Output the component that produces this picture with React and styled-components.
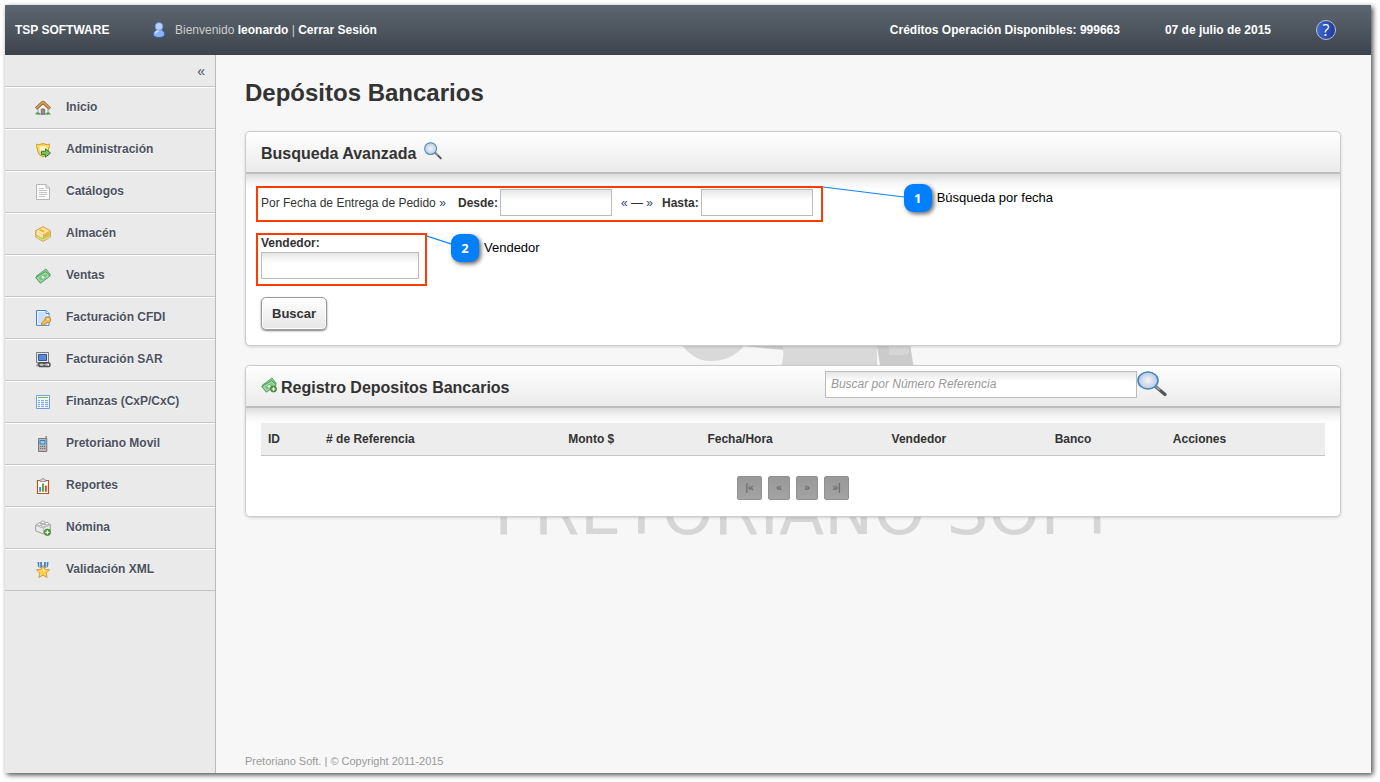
import React, { useState } from "react";
import styled, { createGlobalStyle } from "styled-components";

const HomeIcon = () => (
  <Icon viewBox="0 0 16 16">
    <path d="M3 8.5L8 4l5 4.500V14H3z" fill="#f3efe9" stroke="#8b8b8b" strokeWidth="0.8" />
    <path d="M6.300 9h3.400v5.300H6.300z" fill="#8f8f8f" stroke="#5d5d5d" strokeWidth="0.7" />
    <path d="M1 8.600L8 2.200l7 6.400" fill="none" stroke="#8a5a22" strokeWidth="3" strokeLinejoin="round" />
    <path d="M1.200 8.400L8 2.200l6.800 6.200" fill="none" stroke="#d9a35a" strokeWidth="1.6" />
    <path d="M0.500 14.400c0-1.500 1.200-2.400 2.600-2.200 1.200.2 2 1 2.200 2.200zM10.700 14.400c.2-1.400 1.200-2.200 2.400-2.200 1.400 0 2.400 1 2.400 2.200z" fill="#4fa04a" />
  </Icon>
);

const ShieldIcon = () => (
  <Icon viewBox="0 0 16 16">
    <path d="M1.7 2.2l2.1.6L8 1.6l4.2 1.2 2.1-.6v3l-.7 1c0 4-2 7-5.6 8.6C4.400 13.200 2.400 10.200 2.400 6.200l-.7-1z" fill="#fbe48a" stroke="#d9a21d" strokeWidth="1.1" />
    <path d="M4 4.300L8 3.200l4 1.100c.1 4-1.200 6.600-4 8.400-2.800-1.800-4.100-4.400-4-8.400z" fill="#fff5c4" stroke="#f3cd55" strokeWidth="0.8" />
    <path d="M6.500 9.300h4V6.900l5 4.100-5 4.200v-2.500h-4z" fill="#79c267" stroke="#2f7d2c" strokeWidth="1" strokeLinejoin="round" />
  </Icon>
);

const PageIcon = () => (
  <Icon viewBox="0 0 16 16">
    <path d="M1.500.5h9.500l3.500 3.500v11.500h-13z" fill="#fafafa" stroke="#b5b5b5" />
    <path d="M11 .5v3.500h3.500" fill="#e3e3e3" stroke="#b5b5b5" />
    <path d="M4 4.500h5M4 6.500h8M4 8.500h8M4 10.500h8M4 12.500h6" stroke="#c3c3c3" />
  </Icon>
);

const BoxIcon = () => (
  <Icon viewBox="0 0 16 16">
    <path d="M8 .7l7.300 4v6.400L8 15.300.7 11.100V4.700z" fill="#f6d27c" stroke="#cf9a35" strokeLinejoin="round" />
    <path d="M8 1.600l6.200 3.400L8 8.500 1.800 5z" fill="#fdeaa9" />
    <path d="M6 3l4.500 2.600-2.200 1.200L3.800 4.200z" fill="#efb544" />
    <path d="M8 8.500v4.200l6.200-3.400V5z" fill="#e9b04b" />
    <path d="M8 8.500v4.200L1.800 9.300V5z" fill="#fbe2a0" />
    <path d="M1.200 8.800L8 12.200l6.800-3.400v2.100L8 14.600 1.200 10.900z" fill="#a6d15a" />
    <path d="M1.200 10.600L8 14.200l6.800-3.600" fill="none" stroke="#fbe2a0" />
  </Icon>
);

const MoneyIcon = ({ plus }) => (
  <Icon viewBox="0 0 16 16">
    <path d="M1.200 8.200L11 .9l4.300 5.600-9.700 7.400z" fill="#8ccf96" stroke="#4c9c58" strokeWidth="0.8" />
    <path d="M.7 9.600L10.600 3.600l4.700 4.200-9.900 7.400z" fill="#7fc68a" stroke="#459450" strokeWidth="0.9" />
    <path d="M2.500 9.800l8-4.800 3.100 2.800-8.100 5.800z" fill="none" stroke="#c7eccb" strokeWidth="0.8" />
    <ellipse cx="8" cy="9.300" rx="2" ry="1.700" fill="#e4f7e5" stroke="#4c9c58" strokeWidth="0.6" />
    {plus && <circle cx="12.500" cy="12" r="3" fill="#58a03c" stroke="#36761f" strokeWidth="0.8" />}
    {plus && <path d="M12.500 10.200v3.600M10.700 12h3.600" stroke="#fff" strokeWidth="1.200" />}
  </Icon>
);

const InvoiceIcon = () => (
  <Icon viewBox="0 0 16 16">
    <path d="M1.500.5h9.500l3 3v11.800H1.500z" fill="#c9e0f8" stroke="#3b82d0" />
    <path d="M2.500 1.500h8v3h2.500v9.800H2.500z" fill="none" stroke="#f2f8ff" />
    <path d="M11 .5v3h3" fill="#fff" stroke="#3b82d0" />
    <path d="M6.300 15l.3-2 3.200-3a3 3 0 1 1 2.600 2.800l-1.300.2-.6 1.200-1.600.3-.6.900z" fill="#f5bc4d" stroke="#b67a1d" strokeWidth="0.8" />
    <circle cx="13" cy="9.300" r="0.800" fill="#fff" />
  </Icon>
);

const ComputerIcon = () => (
  <Icon viewBox="0 0 16 16">
    <path d="M1.500.5h12v10h-12z" fill="#e8e8e8" stroke="#7b7b7b" />
    <path d="M3.500 2.500h8v6h-8z" fill="#5c88d6" stroke="#31549a" />
    <path d="M3 11h8l1.500 3h-11z" fill="#c9c9c9" stroke="#808080" strokeWidth="0.800" />
    <rect x="3.800" y="10.800" width="6" height="3.800" rx="1.900" fill="none" stroke="#4c4c4c" strokeWidth="1.400" />
    <rect x="9" y="10.800" width="6" height="3.800" rx="1.900" fill="none" stroke="#4c4c4c" strokeWidth="1.400" />
    <path d="M7 12.700h5" stroke="#bdbdbd" />
  </Icon>
);

const TableIcon = () => (
  <Icon viewBox="0 0 16 16">
    <path d="M1.500 1.500h13v13h-13z" fill="#fff" stroke="#6f9fdc" />
    <path d="M3 3.500h10" stroke="#72b764" strokeWidth="1.200" />
    <path d="M2.500 5.500h11v8h-11z" fill="#d6e5f8" />
    <path d="M3 6.500h10M3 8.500h10M3 10.500h10M3 12.500h10" stroke="#86aee6" />
    <path d="M5.500 5.500v8M9.500 5.500v8" stroke="#fff" />
  </Icon>
);

const PhoneIcon = () => (
  <Icon viewBox="0 0 16 16">
    <path d="M10.500 0h1.300v4h-1.300z" fill="#7d7d7d" />
    <path d="M3.500 2.500h8.300v13H3.500z" fill="#b9b9b9" stroke="#7a7a7a" />
    <path d="M5 4.500h5v3.500H5z" fill="#8fd1fb" stroke="#2a7fd0" />
    <path d="M5 10.500h1.200m.8 0h1.200m.8 0h1.200M5 12.500h1.200m.8 0h1.200" stroke="#6b6b6b" strokeWidth="1.100" />
    <path d="M9 12.500h1.300" stroke="#d24b3a" strokeWidth="1.100" />
  </Icon>
);

const ReportIcon = () => (
  <Icon viewBox="0 0 16 16">
    <path d="M2.500 2.500h11v13h-11z" fill="#fff" stroke="#b4551c" strokeWidth="1.200" />
    <path d="M5 3.500V2h1.500L7.300.6h1.400L9.500 2H11v1.500z" fill="#dedede" stroke="#858585" strokeWidth="0.800" />
    <path d="M4.200 9h1.900v4.800H4.200z" fill="#3f87d8" />
    <path d="M7 5.500h2v8.300H7z" fill="#51ad37" />
    <path d="M9.900 7.500h1.900v6.300H9.900z" fill="#d6453a" />
  </Icon>
);

const BrickIcon = () => (
  <Icon viewBox="0 0 16 16">
    <path d="M.6 5.200L7 1.800l8.300 2.700v6L8.500 14 .6 10.800z" fill="#e9e9e9" stroke="#979797" strokeWidth="0.900" />
    <path d="M.8 5.400l7.700 2.800 6.700-3.600M8.500 8.200V14" fill="none" stroke="#b2b2b2" strokeWidth="0.800" />
    <ellipse cx="4.300" cy="4.300" rx="1.900" ry="1.300" fill="#fafafa" stroke="#979797" strokeWidth="0.800" />
    <ellipse cx="7.800" cy="2.300" rx="1.900" ry="1.300" fill="#fafafa" stroke="#979797" strokeWidth="0.800" />
    <ellipse cx="8.300" cy="5.700" rx="1.900" ry="1.300" fill="#fafafa" stroke="#979797" strokeWidth="0.800" />
    <ellipse cx="11.900" cy="3.700" rx="1.900" ry="1.300" fill="#fafafa" stroke="#979797" strokeWidth="0.800" />
    <circle cx="12.400" cy="12.300" r="3.200" fill="#4f9c3c" stroke="#33761f" strokeWidth="0.700" />
    <path d="M12.400 10.300v4M10.400 12.300h4" stroke="#fff" strokeWidth="1.300" />
  </Icon>
);

const MedalIcon = () => (
  <Icon viewBox="0 0 16 16">
    <path d="M2.500 0h4.500v6l-4-1zM13.500 0H9v6l4-1z" fill="#4a86bf" />
    <path d="M4.700 0v5M11.300 0v5" stroke="#bfe0f7" />
    <path d="M8 3.300l1.900 4 4.700.5-3.400 3.100.9 4.600L8 13.200l-4.100 2.300.9-4.600-3.400-3.100 4.700-.5z" fill="#fcd254" stroke="#d9912a" strokeWidth="0.900" strokeLinejoin="round" />
    <path d="M8 5.500l1.100 2.600 2.800.4-4 .8z" fill="#fff0b0" />
  </Icon>
);

const UserIcon = () => (
  <Icon viewBox="0 0 16 16">
    <path d="M2.300 12.600C2.300 9.500 4.300 7.200 8 7.200s5.700 2.300 5.700 5.400c0 3.900-11.400 3.900-11.400 0z" fill="#8db2f2" stroke="#2c56b8" strokeWidth="0.900" />
    <circle cx="8" cy="4.400" r="3.900" fill="#b9d1fa" stroke="#5d86d6" strokeWidth="0.800" />
    <path d="M4.500 11.500c.3-1.700 1.500-2.700 3.400-2.700" fill="none" stroke="#dbe7fd" strokeWidth="1.200" />
  </Icon>
);

const SearchIcon = ({ width, height }) => (
  <svg width={width} height={height} viewBox="0 0 30 26" preserveAspectRatio="none" aria-hidden="true">
    <defs>
      <radialGradient id="lens">
        <stop offset="0" stopColor="#f4f6fa" />
        <stop offset="1" stopColor="#b9c9de" />
      </radialGradient>
    </defs>
    <path d="M18.500 15.500L28 23.500" stroke="#555" strokeWidth="3.200" strokeLinecap="round" />
    <path d="M18.500 15.200L23 19" stroke="#9a9a9a" strokeWidth="2" />
    <ellipse cx="11" cy="9.500" rx="10" ry="8.500" fill="url(#lens)" stroke="#3f86c2" strokeWidth="1.600" />
  </svg>
);

const Watermark = () => (
  <WatermarkSvg viewBox="0 0 640 210" aria-hidden="true">
    <path d="M182 0h62v16c-8 9-18 15-34 15-13 0-22-8-28-16z" fill="#d9d9d9" />
    <path d="M242 0h42v20l-42-4z" fill="#cdcdcd" />
    <path d="M283 0h94v40h-98c4-8 5-14 4-20z" fill="#d9d9d9" />
    <path d="M374 0h34l6 40h-33z" fill="#cbcbcb" />
    <path d="M389 0h20v24q-10 2-20 1z" fill="#d5d5d5" />
    <WatermarkText x="-6" y="204">PRETORIANO SOFT</WatermarkText>
  </WatermarkSvg>
);

const menuItems = [
  { label: "Inicio", icon: <HomeIcon /> },
  { label: "Administración", icon: <ShieldIcon /> },
  { label: "Catálogos", icon: <PageIcon /> },
  { label: "Almacén", icon: <BoxIcon /> },
  { label: "Ventas", icon: <MoneyIcon /> },
  { label: "Facturación CFDI", icon: <InvoiceIcon /> },
  { label: "Facturación SAR", icon: <ComputerIcon /> },
  { label: "Finanzas (CxP/CxC)", icon: <TableIcon /> },
  { label: "Pretoriano Movil", icon: <PhoneIcon /> },
  { label: "Reportes", icon: <ReportIcon /> },
  { label: "Nómina", icon: <BrickIcon /> },
  { label: "Validación XML", icon: <MedalIcon /> },
];

const columns = [
  { label: "ID", width: 58 },
  { label: "# de Referencia", width: 242 },
  { label: "Monto $", width: 139 },
  { label: "Fecha/Hora", width: 184 },
  { label: "Vendedor", width: 163 },
  { label: "Banco", width: 118 },
  { label: "Acciones", width: 159 },
];

const Note = ({ number, text, length, from, to, top }) => (
  <Callout $top={top}>
    <svg width={length} height="28" aria-hidden="true">
      <line x1="0" y1={from} x2={length} y2={to} stroke="#0a84ff" strokeWidth="1.200" />
    </svg>
    <Badge>{number}</Badge>
    <span>{text}</span>
  </Callout>
);

const App = () => {
  const [search, setSearch] = useState({ desde: "", hasta: "", vendedor: "" });
  const [reference, setReference] = useState("");

  const onChangeHandler = (e) => {
    const { name, value } = e.target;
    setSearch({ ...search, [name]: value });
  };

  return (
    <>
      <GlobalStyle />
      <Frame>
        <TopBar>
          <Brand>TSP SOFTWARE</Brand>
          <UserIcon />
          <Welcome>
            Bienvenido <b>leonardo</b> | <a href="#salir">Cerrar Sesión</a>
          </Welcome>
          <Status>
            <span>Créditos Operación Disponibles: 999663</span>
            <span>07 de julio de 2015</span>
            <HelpButton type="button" aria-label="Ayuda">?</HelpButton>
          </Status>
        </TopBar>

        <Columns>
          <Sidebar>
            <CollapseRow>
              <CollapseButton type="button" aria-label="Ocultar menú">«</CollapseButton>
            </CollapseRow>
            {menuItems.map((item) => (
              <MenuLink key={item.label} href="#menu">
                {item.icon}
                <MenuLabel>{item.label}</MenuLabel>
              </MenuLink>
            ))}
          </Sidebar>

          <Main>
            <Watermark />
            <PageTitle>Depósitos Bancarios</PageTitle>

            <Card>
              <CardHead>
                <CardTitle $gap={8}>
                  Busqueda Avanzada
                  <SearchIcon width={18} height={18} />
                </CardTitle>
              </CardHead>
              <SearchForm onSubmit={(e) => e.preventDefault()}>
                <DateBox>
                  <DateCaption>
                    Por Fecha de Entrega de Pedido <Arrow>»</Arrow>
                  </DateCaption>
                  <Label htmlFor="desde">Desde:</Label>
                  <TextInput id="desde" name="desde" $width={112} value={search.desde} onChange={onChangeHandler} />
                  <Between>
                    <Arrow>«</Arrow> — <Arrow>»</Arrow>
                  </Between>
                  <Label htmlFor="hasta">Hasta:</Label>
                  <TextInput id="hasta" name="hasta" $width={112} value={search.hasta} onChange={onChangeHandler} />
                  <Note number={1} text="Búsqueda por fecha" length={81} from={3} to={13} top={-4} />
                </DateBox>
                <SellerBox>
                  <Label htmlFor="vendedor">Vendedor:</Label>
                  <TextInput id="vendedor" name="vendedor" $width={158} value={search.vendedor} onChange={onChangeHandler} />
                  <Note number={2} text="Vendedor" length={24} from={2} to={10} top={-1} />
                </SellerBox>
                <SubmitButton type="submit">Buscar</SubmitButton>
              </SearchForm>
            </Card>

            <Card>
              <CardHead>
                <RecordsTitle $gap={4}>
                  <MoneyIcon plus />
                  Registro Depositos Bancarios
                </RecordsTitle>
                <ReferenceSearch>
                  <TextInput
                    aria-label="Buscar por Número Referencia"
                    placeholder="Buscar por Número Referencia"
                    $width={312}
                    value={reference}
                    onChange={(e) => setReference(e.target.value)}
                  />
                  <IconButton type="button" aria-label="Buscar referencia">
                    <SearchIcon width={30} height={26} />
                  </IconButton>
                </ReferenceSearch>
              </CardHead>
              <Records>
                <Table>
                  <thead>
                    <tr>
                      {columns.map((column) => (
                        <Th key={column.label} $width={column.width}>{column.label}</Th>
                      ))}
                    </tr>
                  </thead>
                </Table>
                <Pager>
                  <PageButton type="button" $width={25} aria-label="Primera">|«</PageButton>
                  <PageButton type="button" $width={22} aria-label="Anterior">«</PageButton>
                  <PageButton type="button" $width={22} aria-label="Siguiente">»</PageButton>
                  <PageButton type="button" $width={25} aria-label="Última">»|</PageButton>
                </Pager>
              </Records>
            </Card>

            <Footer>Pretoriano Soft. | © Copyright 2011-2015</Footer>
          </Main>
        </Columns>
      </Frame>
    </>
  );
};

export default App;

const GlobalStyle = createGlobalStyle`
  * {
    box-sizing: border-box;
  }

  body {
    margin: 0;
    background: #fff;
    color: #333;
    font-family: "Liberation Sans", Arial, sans-serif;
    font-size: 12px;
    line-height: 16px;
  }

  input,
  button {
    font-family: inherit;
    font-size: 12px;
  }

  a {
    text-decoration: none;
  }
`;

const Frame = styled.div`
  display: flex;
  flex-direction: column;
  min-height: calc(100vh - 14px);
  margin: 5px 9px 9px 5px;
  box-shadow: 2px 2px 5px rgba(0, 0, 0, 0.7);
`;

const Icon = styled.svg.attrs({ "aria-hidden": true })`
  flex: none;
  width: 16px;
  height: 16px;
`;

const TopBar = styled.header`
  display: flex;
  align-items: center;
  height: 50px;
  padding: 0 35px 0 10px;
  color: #fff;
  background: linear-gradient(#5d6771, #3d434c);
`;

const Brand = styled.strong`
  width: 136px;
`;

const Welcome = styled.div`
  margin-left: 8px;
  color: #ccc;

  b,
  a {
    color: #fff;
    font-weight: 700;
  }
`;

const Status = styled.div`
  display: flex;
  align-items: center;
  gap: 45px;
  margin-left: auto;
  font-weight: 700;
`;

const HelpButton = styled.button`
  width: 20px;
  height: 20px;
  padding: 0;
  border: 1px solid #b9bfd0;
  border-radius: 50%;
  color: #fff;
  background: linear-gradient(90deg, #4169cf, #1d3c9c);
  font-family: "Open Sans", sans-serif;
  font-size: 16px;
  line-height: 18px;
`;

const Columns = styled.div`
  display: flex;
  flex: 1;
`;

const Sidebar = styled.nav`
  flex: none;
  width: 211px;
  border-right: 1px solid #b9b9b9;
  background: #eaeaea;
`;

const CollapseRow = styled.div`
  display: flex;
  justify-content: flex-end;
  height: 32px;
  padding: 0 10px;
  border-bottom: 1px solid #c5c5c5;
`;

const CollapseButton = styled.button`
  padding: 0;
  border: none;
  color: #454d5c;
  background: none;
  font-size: 14px;
`;

const MenuLink = styled.a`
  display: flex;
  align-items: center;
  gap: 15px;
  height: 42px;
  padding: 0 30px;
  border-top: 1px solid #fff;
  border-bottom: 1px solid #c5c5c5;
  color: #4b5160;
  font-weight: 700;
  text-shadow: 0 1px 0 #fff;
`;

const MenuLabel = styled.span`
  padding-bottom: 2px;
`;

const Main = styled.main`
  position: relative;
  z-index: 0;
  display: flex;
  flex: 1;
  flex-direction: column;
  gap: 19px;
  padding: 20px 30px 4px 29px;
  background: #f7f7f7;
`;

const WatermarkSvg = styled.svg`
  position: absolute;
  z-index: -1;
  top: 275px;
  left: calc(50% - 294px);
  width: 640px;
  height: 210px;
`;

const WatermarkText = styled.text`
  fill: #d6d6d6;
  font-family: "DejaVu Sans", sans-serif;
  font-size: 66px;
`;

const PageTitle = styled.h1`
  margin: 0 0 1px;
  font-size: 24px;
  line-height: 36px;
`;

const Card = styled.section`
  border: 1px solid #ccc;
  border-radius: 5px;
  background: #fff;
  box-shadow: 0 1px 3px rgba(0, 0, 0, 0.15);
`;

const CardHead = styled.div`
  display: flex;
  align-items: center;
  height: 42px;
  padding: 0 15px;
  border-bottom: 2px solid #bebebe;
  border-radius: 5px 5px 0 0;
  background: linear-gradient(#fff, #ebebeb);
`;

const CardTitle = styled.h2`
  display: flex;
  align-items: center;
  gap: ${(props) => props.$gap}px;
  margin: 0;
  padding-top: 3px;
  font-size: 16px;
  line-height: 20px;

  svg {
    margin-bottom: 5px;
  }
`;

const RecordsTitle = styled(CardTitle)`
  width: 53%;
`;

const ReferenceSearch = styled.div`
  display: flex;
  padding-bottom: 4px;
`;

const SearchForm = styled.form`
  display: flex;
  flex-direction: column;
  align-items: flex-start;
  gap: 11px;
  padding: 12px 10px 15px;
  background: linear-gradient(#dcdcdc, #f4f4f4 8px, #fff 16px);
  border-radius: 0 0 5px 5px;
`;

const DateBox = styled.div`
  position: relative;
  display: flex;
  align-items: center;
  padding: 1px 8px 4px 3px;
  border: 2px solid #ff3c00;
`;

const SellerBox = styled.div`
  position: relative;
  display: flex;
  flex-direction: column;
  align-items: flex-start;
  gap: 1px;
  padding: 0 6px 5px 3px;
  border: 2px solid #ff3c00;
`;

const DateCaption = styled.span`
  width: 197px;
`;

const Between = styled.span`
  width: 50px;
  text-align: center;
`;

const Arrow = styled.span`
  color: #2b4a6b;
`;

const Label = styled.label`
  margin-right: 2px;
  font-weight: 700;
`;

const TextInput = styled.input`
  width: ${(props) => props.$width}px;
  height: 27px;
  padding: 0 5px;
  border: 1px solid #bbb;
  border-radius: 0;
  color: #333;
  background: linear-gradient(#e6e6e6, #fff 10px);

  &::placeholder {
    color: #999;
    font-style: italic;
  }
`;

const Callout = styled.div`
  position: absolute;
  top: ${(props) => props.$top}px;
  left: calc(100% + 2px);
  display: flex;
  align-items: center;
  color: #000;
  font-size: 13px;
  white-space: nowrap;
`;

const Badge = styled.b`
  width: 28px;
  height: 28px;
  margin-right: 5px;
  border-radius: 9px;
  color: #fff;
  background: #0080ff;
  box-shadow: 2px 2px 4px rgba(0, 0, 0, 0.6);
  font-family: "Open Sans", sans-serif;
  line-height: 28px;
  text-align: center;
`;

const SubmitButton = styled.button`
  height: 33px;
  margin-left: 5px;
  padding: 0 10px;
  border: 1px solid #999;
  border-radius: 5px;
  color: #333;
  background: linear-gradient(#fff, #e6e6e6);
  box-shadow: 0 1px 2px rgba(0, 0, 0, 0.5), inset 0 0 0 1px #fff;
  font-size: 13px;
  font-weight: 700;
`;

const IconButton = styled.button`
  display: flex;
  padding: 0;
  border: none;
  background: none;
`;

const Records = styled.div`
  padding: 15px 15px 16px;
  background: linear-gradient(#dcdcdc, #f4f4f4 8px, #fff 16px);
  border-radius: 0 0 5px 5px;
`;

const Table = styled.table`
  width: 100%;
  border-collapse: collapse;
  table-layout: fixed;
`;

const Th = styled.th`
  width: ${(props) => props.$width}px;
  height: 32px;
  padding: 0 7px;
  border-bottom: 1px solid #c5c5c5;
  background: #ededed;
  text-align: left;
`;

const Pager = styled.div`
  display: flex;
  justify-content: center;
  gap: 6px;
  padding-top: 20px;
`;

const PageButton = styled.button`
  width: ${(props) => props.$width}px;
  height: 24px;
  padding: 0;
  border: 1px solid #919191;
  border-radius: 2px;
  color: #555;
  background: linear-gradient(#999, #a3a3a3);
  font-size: 10px;
`;

const Footer = styled.footer`
  margin-top: auto;
  color: #999;
  font-size: 11px;
`;
